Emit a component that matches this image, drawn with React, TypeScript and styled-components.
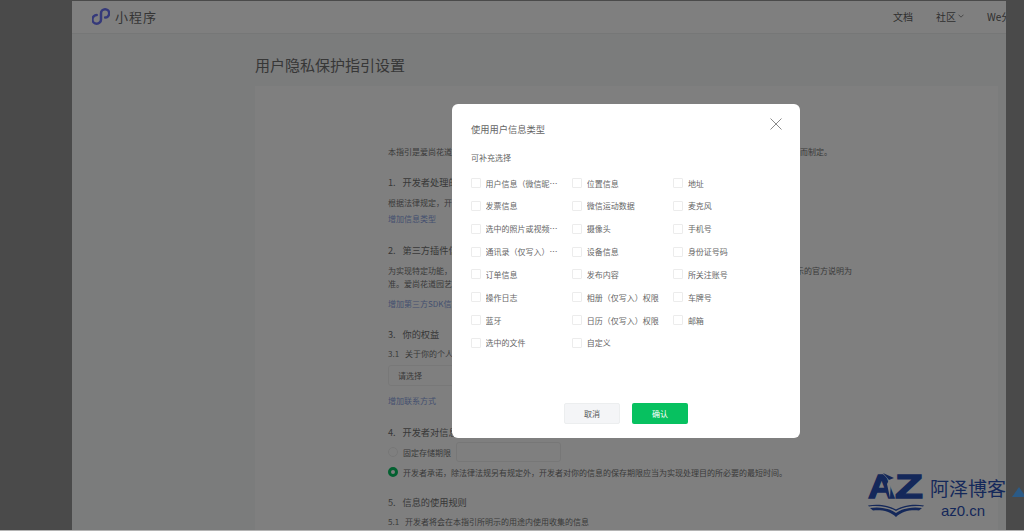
import React from 'react';
import styled, { createGlobalStyle } from 'styled-components';

const GlobalStyle = createGlobalStyle`
  html, body {
    margin: 0;
    padding: 0;
    width: 100%;
    height: 100%;
    overflow: hidden;
    background: #959595;
  }
  * { box-sizing: border-box; }
  body {
    font-family: "Noto Sans CJK SC", "Noto Sans", sans-serif;
  }
`;

const Screen = styled.div`
  width: 1024px;
  height: 531px;
  padding: 1px 18px 0 72px;
  overflow: hidden;
  position: relative;
`;

const Page = styled.div`
  width: 934px;
  height: 600px;
  background: #f6f8f9;
`;

const Header = styled.header`
  display: flex;
  align-items: center;
  height: 33px;
  padding: 0 0 2px 20px;
  background: #fff;
  border-bottom: 1px solid #eceeef;
  overflow: hidden;
`;

const Brand = styled.div`
  flex: 0 0 801px;
  display: flex;
  align-items: center;
  gap: 5px;
`;

const BrandName = styled.span`
  font-size: 13px;
  letter-spacing: 1px;
  color: #6b6b6b;
`;

const Nav = styled.nav`
  flex: none;
  display: flex;
  align-items: center;
  gap: 23px;
  font-size: 10px;
  color: #5e5e5e;
`;

const NavItem = styled.span`
  display: inline-flex;
  align-items: center;
  gap: 2px;
  white-space: nowrap;
`;

const Content = styled.main`
  padding: 20px 8px 0 183px;
`;

const PageTitle = styled.h1`
  margin: 0 0 11px;
  font-size: 15px;
  line-height: 21px;
  font-weight: 400;
  color: #6e6e6e;
`;

const Card = styled.section`
  background: #fff;
  padding: 59px 0 0 133px;
  height: 500px;
`;

const Doc = styled.div`
  width: 464px;
`;

const Para = styled.p<{ $top: number }>`
  margin: ${p => p.$top}px 0 0;
  font-size: 8px;
  line-height: 14px;
  color: #757575;
  white-space: nowrap;
`;

const WrappedPara = styled.p`
  margin: 6px 0 0;
  font-size: 8px;
  line-height: 13px;
  color: #757575;
`;

const Heading = styled.h2<{ $top: number }>`
  margin: ${p => p.$top}px 0 0;
  font-size: 9.2px;
  line-height: 16px;
  font-weight: 400;
  color: #707070;
  white-space: nowrap;
`;

const HeadingNum = styled.span`
  display: inline-block;
  width: 14.5px;
`;

const SubNum = styled.span`
  display: inline-block;
  width: 17px;
`;

const AddLink = styled.a<{ $top: number }>`
  display: block;
  margin-top: ${p => p.$top}px;
  font-size: 8px;
  line-height: 14px;
  color: #8a9fe0;
`;

const Select = styled.div`
  margin-top: 4px;
  width: 240px;
  height: 21px;
  padding-left: 9px;
  display: flex;
  align-items: center;
  border: 1px solid #f0f0f0;
  border-radius: 3px;
  font-size: 8px;
  color: #757575;
`;

const RadioRow = styled.div<{ $top: number }>`
  display: flex;
  align-items: center;
  gap: 5px;
  margin-top: ${p => p.$top}px;
  min-height: 14px;
  font-size: 8px;
  color: #757575;
  white-space: nowrap;
`;

const Radio = styled.span<{ $checked?: boolean }>`
  flex: none;
  width: 10px;
  height: 10px;
  border-radius: 50%;
  border: ${p => (p.$checked ? '3.5px solid #07c160' : '1px solid #eeeeee')};
  background: #fff;
`;

const TermInput = styled.div`
  width: 105px;
  height: 20px;
  border: 1px solid #eeeeee;
  border-radius: 3px;
`;

const Mask = styled.div`
  position: absolute;
  inset: 0;
  background: rgba(0, 0, 0, 0.5);
`;

const Modal = styled.div`
  position: absolute;
  left: 452px;
  top: 104px;
  width: 348px;
  height: 334px;
  padding: 18px 19px 14px;
  display: flex;
  flex-direction: column;
  background: #fff;
  border-radius: 6px;
`;

const CloseButton = styled.button`
  position: absolute;
  top: 14px;
  right: 18px;
  width: 12px;
  height: 12px;
  padding: 0;
  display: flex;
  border: 0;
  background: none;
`;

const ModalTitle = styled.div`
  font-size: 9.25px;
  line-height: 14px;
  color: #666;
`;

const Hint = styled.div`
  margin-top: 16px;
  font-size: 8px;
  line-height: 12px;
  color: #666;
`;

const OptionGrid = styled.div`
  margin-top: 7.6px;
  display: grid;
  grid-template-columns: repeat(3, 101.2px);
  grid-auto-rows: 22.85px;
  flex: 1;
  align-content: start;
`;

const Option = styled.label`
  display: flex;
  align-items: center;
  gap: 4.5px;
  font-size: 8px;
  color: #666;
`;

const Check = styled.span`
  flex: none;
  width: 10px;
  height: 10px;
  border: 1px solid #ececec;
  border-radius: 1px;
`;

const OptionText = styled.span`
  max-width: 72px;
  overflow: hidden;
  white-space: nowrap;
  text-overflow: ellipsis;
`;

const Footer = styled.div`
  display: flex;
  justify-content: center;
  gap: 12px;
`;

const Button = styled.button<{ $primary?: boolean }>`
  width: 56px;
  height: 21px;
  padding: 0;
  font-family: inherit;
  font-size: 8px;
  border-radius: 2px;
  border: ${p => (p.$primary ? '0' : '1px solid #eceeef')};
  background: ${p => (p.$primary ? '#07c160' : '#f4f5f7')};
  color: ${p => (p.$primary ? '#fff' : '#555')};
`;

const Watermark = styled.div`
  position: absolute;
  left: 867px;
  top: 472px;
  display: flex;
  gap: 5px;
  color: #14285a;
`;

const WatermarkText = styled.div`
  display: flex;
  flex-direction: column;
  align-items: center;
  padding-top: 3px;
`;

const WatermarkName = styled.span`
  font-size: 19px;
  line-height: 26px;
  white-space: nowrap;
`;

const WatermarkUrl = styled.span`
  margin: 1px 10px 0 0;
  font-family: "Liberation Sans", sans-serif;
  font-size: 15px;
  line-height: 17px;
`;

const CornerMark = styled.span`
  position: absolute;
  left: 1012px;
  top: 487px;
  width: 0;
  height: 0;
  border-left: 7px solid transparent;
  border-right: 7px solid transparent;
  border-bottom: 10px solid #2b5a86;
`;

const BottomEdge = styled.div`
  position: absolute;
  left: 0;
  right: 0;
  bottom: 0;
  height: 1px;
  background: #b4b4b4;
`;

const options = [
  '用户信息（微信昵称、头像）', '位置信息', '地址',
  '发票信息', '微信运动数据', '麦克风',
  '选中的照片或视频信息', '摄像头', '手机号',
  '通讯录（仅写入）权限', '设备信息', '身份证号码',
  '订单信息', '发布内容', '所关注账号',
  '操作日志', '相册（仅写入）权限', '车牌号',
  '蓝牙', '日历（仅写入）权限', '邮箱',
  '选中的文件', '自定义',
];

const MiniLogo = () => (
  <svg width="18" height="17" viewBox="0 0 18 17" fill="none">
    <path
      d="M9 5.4 V11.4 A4.3 4.3 0 1 1 4.7 7.1 M9 5.4 A4.1 4.1 0 1 1 13.1 9.5"
      stroke="#6a72f4"
      strokeWidth="2.5"
      strokeLinecap="round"
    />
  </svg>
);

const AzLogo = () => (
  <svg width="58" height="46" viewBox="0 0 58 46">
    <g fontFamily="Liberation Sans" fontWeight="700" fontSize="33" fill="#14285a" stroke="#14285a" strokeWidth="1.3">
      <text x="1" y="26" textLength="27" lengthAdjust="spacingAndGlyphs">A</text>
      <text x="28" y="26" textLength="28" lengthAdjust="spacingAndGlyphs">Z</text>
    </g>
    <path d="M15 1 L28 6 L24 9 L23 26 L20 12 L22 8 Z" fill="#808080" />
    <path d="M16 1 L27 6 L22 8 Z" fill="#14285a" />
    <path d="M1 33.5 C10 31.5 22 33 29 37.5 C36 33 48 31.5 57 33.5 L56 34.5 C46 33 36 35 29 39 C22 35 12 33 2 34.5 Z" fill="#14285a" />
    <path d="M3 36 C12 34.5 22 36 29 41 C36 36 46 34.5 55 36 L52 38.5 C44 37.5 35 39 29 45 C23 39 14 37.5 6 38.5 Z" fill="#14285a" />
  </svg>
);

export default function App() {
  return (
    <>
      <GlobalStyle />
      <Screen>
        <Page>
          <Header>
            <Brand>
              <MiniLogo />
              <BrandName>小程序</BrandName>
            </Brand>
            <Nav>
              <NavItem>文档</NavItem>
              <NavItem>
                社区
                <svg width="6" height="4" viewBox="0 0 6 4" fill="none">
                  <path d="M.5.7 3 3.2 5.5.7" stroke="#5e5e5e" strokeWidth=".7" />
                </svg>
              </NavItem>
              <NavItem>We分析</NavItem>
            </Nav>
          </Header>
          <Content>
            <PageTitle>用户隐私保护指引设置</PageTitle>
            <Card>
              <Doc>
                <Para $top={0}>本指引是爱尚花道园艺服务小程序开发者爱尚花道园艺服务用品有限公司（以下简称“开发者”）为处理你的个人信息而制定。</Para>
                <Heading $top={15}><HeadingNum>1.</HeadingNum>开发者处理的信息</Heading>
                <Para $top={6}>根据法律规定，开发者仅处理实现小程序功能所必要的信息。</Para>
                <AddLink $top={2}>增加信息类型</AddLink>
                <Heading $top={16}><HeadingNum>2.</HeadingNum>第三方插件信息</Heading>
                <WrappedPara>
                  为实现特定功能，开发者可能会接入由第三方服务商提供的插件。该等第三方插件的个人信息处理规则，请你以其公示的官方说明为准。爱尚花道园艺用品有限公司将对第三方插件进行管理。
                </WrappedPara>
                <AddLink $top={7}>增加第三方SDK信息</AddLink>
                <Heading $top={15}><HeadingNum>3.</HeadingNum>你的权益</Heading>
                <Para $top={5}><SubNum>3.1</SubNum>关于你的个人信息，你可以通过以下方式与开发者联系。</Para>
                <Select>请选择</Select>
                <AddLink $top={8}>增加联系方式</AddLink>
                <Heading $top={16}><HeadingNum>4.</HeadingNum>开发者对信息的存储</Heading>
                <RadioRow $top={2}>
                  <Radio />
                  固定存储期限
                  <TermInput />
                </RadioRow>
                <RadioRow $top={3}>
                  <Radio $checked />
                  开发者承诺，除法律法规另有规定外，开发者对你的信息的保存期限应当为实现处理目的所必要的最短时间。
                </RadioRow>
                <Heading $top={15}><HeadingNum>5.</HeadingNum>信息的使用规则</Heading>
                <Para $top={5}><SubNum>5.1</SubNum>开发者将会在本指引所明示的用途内使用收集的信息</Para>
              </Doc>
            </Card>
          </Content>
        </Page>
        <Mask />
        <Modal>
          <CloseButton aria-label="关闭">
            <svg width="12" height="12" viewBox="0 0 12 12" fill="none">
              <path d="M.5.5 11.5 11.5M11.5.5 .5 11.5" stroke="#8a8a8a" strokeWidth="1" />
            </svg>
          </CloseButton>
          <ModalTitle>使用用户信息类型</ModalTitle>
          <Hint>可补充选择</Hint>
          <OptionGrid>
            {options.map(option => (
              <Option key={option}>
                <Check />
                <OptionText>{option}</OptionText>
              </Option>
            ))}
          </OptionGrid>
          <Footer>
            <Button>取消</Button>
            <Button $primary>确认</Button>
          </Footer>
        </Modal>
        <Watermark>
          <AzLogo />
          <WatermarkText>
            <WatermarkName>阿泽博客</WatermarkName>
            <WatermarkUrl>az0.cn</WatermarkUrl>
          </WatermarkText>
        </Watermark>
        <CornerMark />
        <BottomEdge />
      </Screen>
    </>
  );
}
